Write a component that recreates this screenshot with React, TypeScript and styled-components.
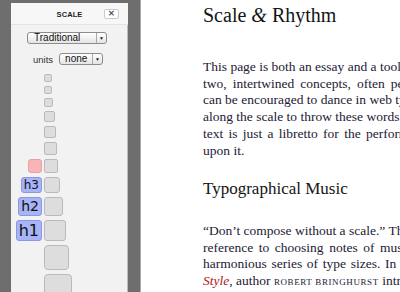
import React from "react";
import styled, { createGlobalStyle } from "styled-components";

const Global = createGlobalStyle`
  html, body { margin: 0; padding: 0; }
  body { width: 400px; height: 292px; overflow: hidden; background: #6e6e6e; }
`;

const Stage = styled.div`
  display: flex;
  width: 400px;
  height: 292px;
  overflow: hidden;
  background: #6e6e6e;
  padding-left: 11px;
  box-sizing: border-box;
`;

const Panel = styled.aside`
  flex: 0 0 117px;
  margin-top: 3px;
  background: #f2f2f2;
  display: flex;
  flex-direction: column;
  font-family: "Liberation Sans", Arial, sans-serif;
  overflow: hidden;
  box-shadow: inset -1px 0 0 #bdbdbd;
  & > * { flex-shrink: 0; }
`;

const Header = styled.div`
  display: grid;
  grid-template-columns: 1fr auto 1fr;
  align-items: center;
  height: 22px;
  background: #f7f7f7;
  border-bottom: 1px solid #e3e3e3;
  box-sizing: border-box;
`;

const Title = styled.div`
  grid-column: 2;
  font-size: 7.5px;
  font-weight: bold;
  color: #1e1e1e;
  letter-spacing: 0.1px;
  padding-top: 1px;
`;

const Close = styled.div`
  grid-column: 3;
  justify-self: end;
  margin-right: 9px;
  width: 15px;
  height: 10px;
  box-sizing: border-box;
  border: 1px solid #cbcbcb;
  border-radius: 2px;
  background: #fff;
  display: flex;
  align-items: center;
  justify-content: center;
  font-size: 8px;
  font-weight: bold;
  color: #555;
  line-height: 1;
`;

const Controls = styled.div`
  display: flex;
  flex-direction: column;
  align-items: flex-start;
  padding: 7px 0 0 16px;
  gap: 9px;
`;

const Select = styled.div<{ $w: number }>`
  display: flex;
  align-items: stretch;
  width: ${(p) => p.$w}px;
  height: 12px;
  box-sizing: border-box;
  border: 1px solid #8c8c8c;
  border-radius: 3px;
  background: linear-gradient(#ffffff, #e4e4e4);
  font-size: 10px;
  color: #111;
  overflow: hidden;
`;

const SelectText = styled.span<{ $pad: number }>`
  flex: 1;
  padding-left: ${(p) => p.$pad}px;
  line-height: 10px;
`;

const Arrow = styled.span`
  flex: 0 0 9px;
  border-left: 1px solid #a8a8a8;
  display: flex;
  align-items: center;
  justify-content: center;
  font-size: 5px;
  color: #222;
`;

const UnitsRow = styled.div`
  display: flex;
  align-items: center;
  gap: 6px;
  padding-left: 6px;
`;

const UnitsLabel = styled.span`
  font-size: 9.5px;
  color: #333;
`;

const ScaleList = styled.div`
  display: flex;
  flex-direction: column;
  gap: 4px;
  margin-top: 9px;
  & > * { flex-shrink: 0; }
`;

const ScaleRow = styled.div`
  display: grid;
  grid-template-columns: 31px auto;
  column-gap: 2px;
  align-items: start;
`;

const Tag = styled.div<{ $s: number; $fs: number; $pink?: boolean }>`
  grid-column: 1;
  justify-self: end;
  height: ${(p) => p.$s}px;
  min-width: ${(p) => p.$s}px;
  box-sizing: border-box;
  padding: 0 2px;
  border: 1px solid ${(p) => (p.$pink ? "#e6a2a6" : "#8a98e4")};
  background: ${(p) => (p.$pink ? "#f8b4b7" : "#a7b4f7")};
  border-radius: 3px;
  font-family: "DejaVu Sans", Verdana, sans-serif;
  font-size: ${(p) => p.$fs}px;
  line-height: ${(p) => p.$s - 2}px;
  text-align: center;
  color: #111;
`;

const Box = styled.div<{ $s: number }>`
  grid-column: 2;
  width: ${(p) => p.$s}px;
  height: ${(p) => p.$s}px;
  box-sizing: border-box;
  border: 1px solid #bababa;
  background: #dddddd;
  border-radius: ${(p) => Math.max(2, Math.round(p.$s * 0.16))}px;
`;

const Page = styled.main`
  flex: 1 1 auto;
  min-width: 0;
  margin-left: 12px;
  background: #ffffff;
  border-left: 1px solid #a9a9a9;
  padding: 3px 0 0 62px;
  overflow: hidden;
  font-family: "Liberation Serif", "Times New Roman", serif;
  color: #232035;
`;

const H1 = styled.h1`
  margin: 0;
  font-size: 20px;
  line-height: 24px;
  font-weight: normal;
  color: #141414;
  white-space: nowrap;
`;

const H2 = styled.h2`
  margin: 20px 0 0;
  font-size: 17px;
  line-height: 20px;
  font-weight: normal;
  color: #141414;
  white-space: nowrap;
`;

const Para = styled.div<{ $top: number }>`
  margin-top: ${(p) => p.$top}px;
  font-size: 13.5px;
  line-height: 16.7px;
`;

const Line = styled.div<{ $ws?: number }>`
  white-space: nowrap;
  word-spacing: ${(p) => p.$ws ?? 0}px;
`;

const Amp = styled.span`
  font-style: italic;
`;

const Red = styled.em`
  color: #a8161b;
`;

const Caps = styled.span`
  font-variant-caps: all-small-caps;
  letter-spacing: 0.6px;
`;

const scale = [
  { s: 8 },
  { s: 8 },
  { s: 9 },
  { s: 11 },
  { s: 12 },
  { s: 12.7 },
  { s: 14.3, tag: "", pink: true, fs: 10 },
  { s: 16, tag: "h3", fs: 12 },
  { s: 18.7, tag: "h2", fs: 14 },
  { s: 21.5, tag: "h1", fs: 16 },
  { s: 24.5 },
  { s: 28 },
];

export default function App() {
  return (
    <>
      <Global />
      <Stage>
        <Panel>
          <Header>
            <Title>SCALE</Title>
            <Close>✕</Close>
          </Header>
          <Controls>
            <Select $w={80}>
              <SelectText $pad={6}>Traditional</SelectText>
              <Arrow>▼</Arrow>
            </Select>
            <UnitsRow>
              <UnitsLabel>units</UnitsLabel>
              <Select $w={44}>
                <SelectText $pad={5}>none</SelectText>
                <Arrow>▼</Arrow>
              </Select>
            </UnitsRow>
          </Controls>
          <ScaleList>
            {scale.map((r, i) => (
              <ScaleRow key={i}>
                {r.tag !== undefined && (
                  <Tag $s={r.s} $fs={r.fs ?? 12} $pink={r.pink}>
                    {r.tag}
                  </Tag>
                )}
                <Box $s={r.s} />
              </ScaleRow>
            ))}
          </ScaleList>
        </Panel>
        <Page>
          <H1>
            Scale <Amp>&amp;</Amp> Rhythm
          </H1>
          <Para $top={32}>
            <Line>This page is both an essay and a tool for exploring</Line>
            <Line $ws={2.7}>two, intertwined concepts, often perceived as one, that</Line>
            <Line>can be encouraged to dance in web typography. Move</Line>
            <Line>along the scale to throw these words about; the</Line>
            <Line $ws={1.9}>text is just a libretto for the performance set</Line>
            <Line>upon it.</Line>
          </Para>
          <H2>Typographical Music</H2>
          <Para $top={23.8}>
            <Line>“Don’t compose without a scale.” This is a</Line>
            <Line $ws={2.2}>reference to choosing notes of musical pitch as a</Line>
            <Line $ws={1.3}>harmonious series of type sizes. In The Elements of</Line>
            <Line>
              <Red>Style</Red>, author <Caps>Robert Bringhurst</Caps> introduces
            </Line>
          </Para>
        </Page>
      </Stage>
    </>
  );
}
